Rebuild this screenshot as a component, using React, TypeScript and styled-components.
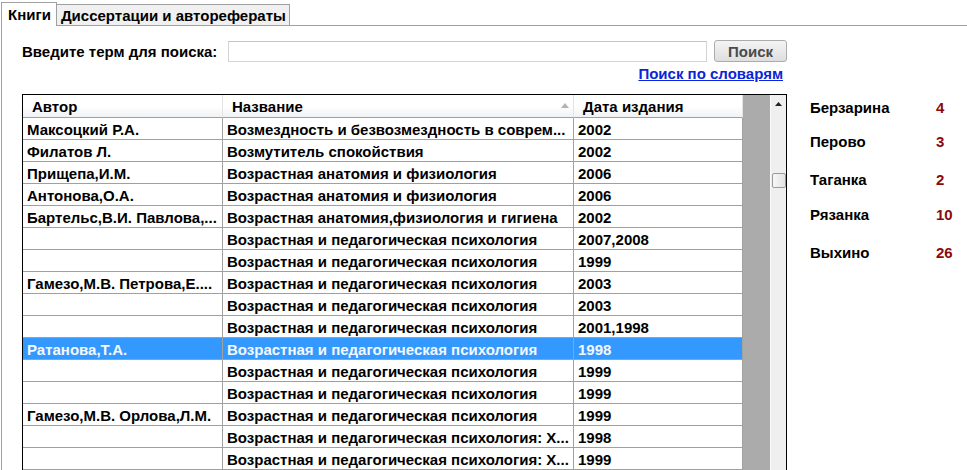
import styled, { createGlobalStyle } from "styled-components";

const GlobalStyle = createGlobalStyle`
  html, body {
    margin: 0;
    padding: 0;
    background: #fff;
  }
  body {
    font-family: "Liberation Sans", Arial, sans-serif;
    font-size: 15px;
    font-weight: bold;
    color: #000;
    overflow: hidden;
  }
`;

const Page = styled.div`
  width: 967px;
  height: 470px;
  padding: 2px 0 0 1px;
  box-sizing: border-box;
  overflow: hidden;
`;

const TabStrip = styled.div`
  display: flex;
  align-items: flex-end;
  height: 24px;
`;

const Tab = styled.div<{ $active?: boolean }>`
  box-sizing: border-box;
  height: ${(p) => (p.$active ? "24px" : "22px")};
  line-height: 17px;
  padding: ${(p) => (p.$active ? "3px 5px 0 6px" : "2px 3px 0 4px")};
  border: 1px solid #a0a0a0;
  border-bottom: ${(p) => (p.$active ? "none" : "1px solid #a0a0a0")};
  border-left: ${(p) => (p.$active ? "1px solid #a0a0a0" : "none")};
  background: ${(p) => (p.$active ? "#fff" : "#f0f0f0")};
  white-space: nowrap;
`;

const TabFill = styled.div`
  flex: 1;
  border-bottom: 1px solid #a0a0a0;
`;

const Panel = styled.div`
  display: flex;
  align-items: flex-start;
  border-left: 1px solid #a0a0a0;
  height: 460px;
`;

const Main = styled.div`
  display: flex;
  flex-direction: column;
  width: 765px;
  padding: 14px 0 0 20px;
`;

const SearchRow = styled.div`
  display: flex;
  align-items: center;
  height: 22px;
`;

const Label = styled.label`
  width: 206px;
  white-space: nowrap;
`;

const Input = styled.input`
  width: 479px;
  height: 21px;
  box-sizing: border-box;
  border: 1px solid #d5d5d5;
  border-top-color: #c4c4c4;
  margin: 0;
  padding: 0 3px;
  font: inherit;
  outline: none;
`;

const Button = styled.button`
  margin-left: 7px;
  width: 73px;
  height: 22px;
  box-sizing: border-box;
  border: 1px solid #acacac;
  border-radius: 3px;
  background: linear-gradient(#f4f4f4, #dedede);
  color: #4a4a4a;
  font: inherit;
  padding: 0;
`;

const LinkRow = styled.div`
  display: flex;
  justify-content: flex-end;
  margin-top: 3px;
  height: 17px;
  line-height: 17px;
  padding-right: 4px;
`;

const DictLink = styled.a`
  color: #0a24d8;
  text-decoration: underline;
  cursor: pointer;
`;

const Grid = styled.div`
  display: flex;
  margin-top: 12px;
  border: 1px solid #000;
  border-bottom: none;
  height: 380px;
`;

const Table = styled.div`
  display: grid;
  grid-template-columns: 200px 351px 169px;
  grid-auto-rows: 22px;
  grid-template-rows: 23px;
  width: 720px;
  align-content: start;
  background: #fff;
`;

const HeadCell = styled.div`
  display: flex;
  align-items: center;
  justify-content: space-between;
  box-sizing: border-box;
  padding: 0 4px 0 9px;
  background: linear-gradient(#ffffff 0%, #ffffff 50%, #f1f2f4 100%);
  border-right: 1px solid #e3e3e3;
  border-bottom: 1px solid #a0a0a0;
  white-space: nowrap;
`;

const SortArrow = styled.svg`
  width: 8px;
  height: 5px;
  margin-top: -1px;
`;

const Cell = styled.div<{ $selected?: boolean }>`
  display: flex;
  align-items: center;
  box-sizing: border-box;
  padding: 1px 4px 0 4px;
  border-right: 1px solid #a0a0a0;
  border-bottom: 1px solid #a0a0a0;
  background: ${(p) => (p.$selected ? "#3399ff" : "#fff")};
  color: ${(p) => (p.$selected ? "#f4f8ff" : "#000")};
  white-space: nowrap;
  overflow: hidden;

  &:first-child {
    padding-left: 3px;
  }
`;

const EmptyArea = styled.div`
  width: 27px;
  background: #ababab;
`;

const ScrollBar = styled.div`
  display: flex;
  flex-direction: column;
  align-items: center;
  width: 16px;
  box-sizing: border-box;
  border-left: 1px solid #fafafa;
  background: #efefef;
`;

const ScrollArrow = styled.div`
  display: flex;
  align-items: center;
  justify-content: center;
  height: 17px;
  width: 100%;
`;

const Thumb = styled.div`
  margin-top: 61px;
  width: 14px;
  height: 15px;
  box-sizing: border-box;
  border: 1px solid #9b9b9b;
  border-radius: 2px;
  background: linear-gradient(90deg, #f7f7f7, #e3e3e3);
`;

const Side = styled.div`
  display: flex;
  flex-direction: column;
  margin-left: 23px;
  padding-top: 73px;
`;

const Branch = styled.div<{ $top: number }>`
  display: flex;
  margin-top: ${(p) => p.$top}px;
  height: 17px;
  line-height: 17px;
`;

const BranchName = styled.span`
  width: 126px;
`;

const Count = styled.span`
  color: #8b0a0a;
`;

const rows: [string, string, string][] = [
  ["Максоцкий Р.А.", "Возмездность и безвозмездность в соврем...", "2002"],
  ["Филатов Л.", "Возмутитель спокойствия", "2002"],
  ["Прищепа,И.М.", "Возрастная анатомия и физиология", "2006"],
  ["Антонова,О.А.", "Возрастная анатомия и физиология", "2006"],
  ["Бартельс,В.И. Павлова,...", "Возрастная анатомия,физиология и гигиена", "2002"],
  ["", "Возрастная и педагогическая психология", "2007,2008"],
  ["", "Возрастная и педагогическая психология", "1999"],
  ["Гамезо,М.В. Петрова,Е....", "Возрастная и педагогическая психология", "2003"],
  ["", "Возрастная и педагогическая психология", "2003"],
  ["", "Возрастная и педагогическая психология", "2001,1998"],
  ["Ратанова,Т.А.", "Возрастная и педагогическая психология", "1998"],
  ["", "Возрастная и педагогическая психология", "1999"],
  ["", "Возрастная и педагогическая психология", "1999"],
  ["Гамезо,М.В. Орлова,Л.М.", "Возрастная и педагогическая психология", "1999"],
  ["", "Возрастная и педагогическая психология: Х...", "1998"],
  ["", "Возрастная и педагогическая психология: Х...", "1999"],
];

const SELECTED = 10;

const branches = [
  { name: "Берзарина", count: 4, top: 0 },
  { name: "Перово", count: 3, top: 17 },
  { name: "Таганка", count: 2, top: 21 },
  { name: "Рязанка", count: 10, top: 18 },
  { name: "Выхино", count: 26, top: 21 },
];

export default function App() {
  return (
    <>
      <GlobalStyle />
      <Page>
        <TabStrip>
          <Tab $active>Книги</Tab>
          <Tab>Диссертации и авторефераты</Tab>
          <TabFill />
        </TabStrip>
        <Panel>
          <Main>
            <SearchRow>
              <Label>Введите терм для поиска:</Label>
              <Input />
              <Button>Поиск</Button>
            </SearchRow>
            <LinkRow>
              <DictLink>Поиск по словарям</DictLink>
            </LinkRow>
            <Grid>
              <Table>
                <HeadCell>Автор</HeadCell>
                <HeadCell>
                  Название
                  <SortArrow viewBox="0 0 8 5">
                    <path d="M0 5 L4 0 L8 5 Z" fill="#b4b4b4" />
                  </SortArrow>
                </HeadCell>
                <HeadCell>Дата издания</HeadCell>
                {rows.map((r, i) =>
                  r.map((text, j) => (
                    <Cell key={`${i}-${j}`} $selected={i === SELECTED}>
                      {text}
                    </Cell>
                  ))
                )}
              </Table>
              <EmptyArea />
              <ScrollBar>
                <ScrollArrow>
                  <svg width="7" height="4" viewBox="0 0 7 4">
                    <path d="M0 4 L3.5 0 L7 4 Z" fill="#222" />
                  </svg>
                </ScrollArrow>
                <Thumb />
              </ScrollBar>
            </Grid>
          </Main>
          <Side>
            {branches.map((b) => (
              <Branch key={b.name} $top={b.top}>
                <BranchName>{b.name}</BranchName>
                <Count>{b.count}</Count>
              </Branch>
            ))}
          </Side>
        </Panel>
      </Page>
    </>
  );
}
